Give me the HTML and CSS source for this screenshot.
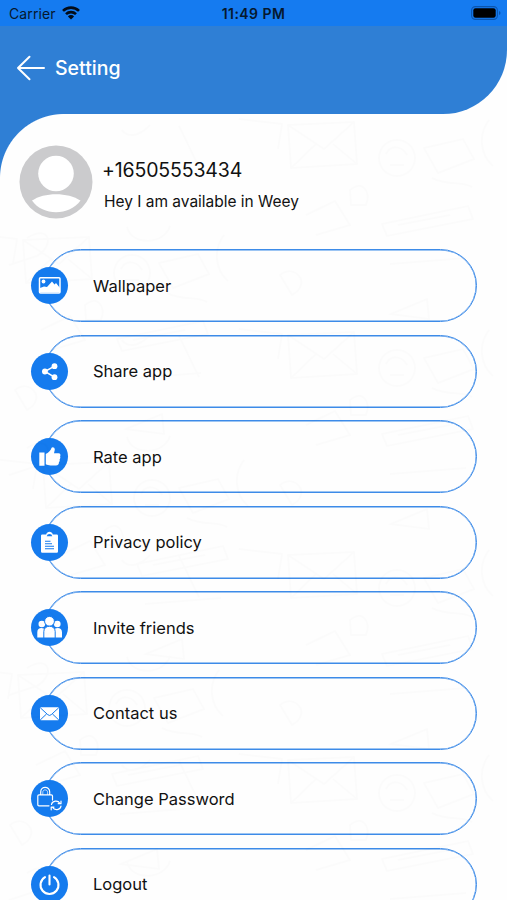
FILE: index.html
```html
<!DOCTYPE html>
<html lang="en">
<head>
<meta charset="utf-8">
<title>Setting</title>
<link rel="stylesheet" href="styles.css">
</head>
<body>
<main class="screen">
  <svg class="doodles" viewBox="0 0 507 900" aria-hidden="true">
    <defs>
      <g id="sketch">
        <path d="M288 125l66-3 3 42-66 4zM288 125l36 24 30-27M291 168l25-24M357 164l-24-20"/>
        <circle cx="397" cy="158" r="18"/><path d="M386 154c5-10 16-8 21 1M390 165h14"/>
        <path d="M424 148l39-9 11 20-36 14zM432 178c16 8 29 3 40 9"/>
        <path d="M382 224l86-18 5 13-86 17zM398 225l52-10M350 190c13-11 21 2 16 15h-15z"/>
        <path d="M489 120c-11 14-9 35 4 46M150 125c-12 13-23 12-28 5M179 126l20 41M239 119l43 5-4 25"/>
        <path d="M27 238c23-14 28 7 10 18l-28 9M127 227c5 20 38 17 43-1M306 215l29-14 15 24-34 10"/>
        <path d="M390 264l76-6M391 314l36-15 2 20zM280 275c14-12 33 8 12 20z"/>
      </g>
    </defs>
    <use href="#sketch"/><use href="#sketch" y="210"/><use href="#sketch" y="430"/><use href="#sketch" y="635"/>
    <use href="#sketch" x="-265" y="115"/><use href="#sketch" x="-245" y="340"/><use href="#sketch" x="-270" y="550"/>
  </svg>

  <div class="status">
    <div class="carrier">
      <span>Carrier</span>
      <svg class="wifi" viewBox="0 0 18 14"><path d="M1 4.9a11.4 11.4 0 0 1 16 0M4 8.2a7.1 7.1 0 0 1 10 0" fill="none" stroke="currentColor" stroke-width="2.6"/><path d="M9 13.5 5.9 10.4a4.4 4.4 0 0 1 6.2 0z" fill="currentColor"/></svg>
    </div>
    <span class="time">11:49 PM</span>
    <svg class="battery" viewBox="0 0 30 14"><rect x=".6" y=".6" width="25.8" height="12.8" rx="3.8" fill="none" stroke="#0b55ae" stroke-width="1.1"/><rect x="2.3" y="2.3" width="22.4" height="9.4" rx="2.2"/><path d="M28 5v4q1.5-.6 1.5-2T28 5z" fill="#0b55ae"/></svg>
  </div>

  <header class="header">
    <svg class="back" viewBox="0 0 30 26"><path d="M28 13H2M13.500 1.800 2 13l11.500 11.200" fill="none" stroke="#fff" stroke-width="2" stroke-linecap="round" stroke-linejoin="round"/></svg>
    <h1>Setting</h1>
  </header>

  <div class="corner"></div>

  <section class="profile">
    <svg class="avatar" viewBox="0 0 74 74"><circle cx="37" cy="37" r="36.5" fill="#cbcbcd"/><circle cx="37" cy="28.5" r="17.8" fill="#fff"/><path d="M13 55.5C25 47 49 47 61.500 55.500C51 70.500 24 71.500 13 55.500z" fill="#fff"/></svg>
    <div class="who">
      <div class="phone">+16505553434</div>
      <div class="about">Hey I am available in Weey</div>
    </div>
  </section>

  <nav class="menu">
    <a class="item">
      <svg class="icon" viewBox="0 0 37 37"><rect x="8.500" y="10.800" width="20.500" height="15.200" rx="1" fill="none" stroke="#fff" stroke-width="1.500"/><circle cx="12.500" cy="14.500" r="1.900" fill="#fff"/><path d="M9 25.500v-4.500l4-1.500 3 .5 5-5.500 2.500 3 1.500-1.500 4 5v4.500z" fill="#fff"/></svg>
      <span>Wallpaper</span>
    </a>
    <a class="item">
      <svg class="icon" viewBox="0 0 37 37"><path d="M23.500 13.200l-9.600 5.300 9.600 5.700" fill="none" stroke="#fff" stroke-width="1.500"/><g fill="#fff"><circle cx="23.500" cy="13.200" r="2.900"/><circle cx="13.900" cy="18.500" r="2.900"/><circle cx="23.500" cy="24.200" r="2.900"/></g></svg>
      <span>Share app</span>
    </a>
    <a class="item">
      <svg class="icon" viewBox="0 0 37 37"><path d="M8.300 14.500h5.200v13.300H8.300zM14.800 16c3.200-1.500 4.800-3.500 5.800-6.200.5-1.200 3.400-.7 3.200 1.900L23 15.300h4.500c2 0 2.300 1.800 1.600 3.300.5 1.200.2 2-.5 2.900.4 1.100 0 2-.7 2.700.2 1.900-.7 3.300-3 3.300h-5.400c-1.900 0-3.200-.5-4.700-1.200z" fill="#fff"/></svg>
      <span>Rate app</span>
    </a>
    <a class="item">
      <svg class="icon" viewBox="0 0 37 37"><path d="M11.200 10.500h4c.8-3.700 5.800-3.700 6.600 0h4q1.200 0 1.200 1.200v15.800q0 1.200-1.200 1.200H11.200q-1.200 0-1.200-1.200V11.700q0-1.200 1.200-1.200z" fill="#fff"/><path d="M15.700 12.300h5.600q-.5-2.200-2.800-2.200t-2.800 2.200z" fill="#157bee"/><path d="M14 17.200h5.500M14 19.700h7M14 22.200h9M14 24.700h9" fill="none" stroke="#157bee" stroke-width="1.100"/></svg>
      <span>Privacy policy</span>
    </a>
    <a class="item">
      <svg class="icon" viewBox="0 0 37 37"><g fill="#fff"><circle cx="10.800" cy="15" r="3.300"/><circle cx="26.300" cy="15" r="3.300"/><path d="M6.300 28.500v-5.300c0-5.600 7-5.400 9-1v6.300zM21.700 28.500v-6.300c2-4.400 9.300-4.600 9.300 1v5.300z"/></g><g fill="#fff" stroke="#157bee"><circle cx="18.500" cy="12.300" r="4.900"/><path d="M12.800 29v-6.500c0-7 11.400-7 11.400 0V29z"/></g></svg>
      <span>Invite friends</span>
    </a>
    <a class="item">
      <svg class="icon" viewBox="0 0 37 37"><rect x="9" y="12.200" width="19" height="13" rx="1" fill="#fff"/><path d="M9.200 12.700l7.600 7q1.700 1.500 3.400 0l7.600-7M9.200 25l6.500-6.200M27.800 25l-6.500-6.200" fill="none" stroke="#157bee" stroke-width="1"/></svg>
      <span>Contact us</span>
    </a>
    <a class="item">
      <svg class="icon" viewBox="0 0 37 37"><g fill="none" stroke="#fff" stroke-width="1.200" stroke-linecap="round" stroke-linejoin="round"><path d="M18 25.800H8q-1.200 0-1.200-1.200v-8.500Q6.800 14.900 8 14.900h12.300q1.200 0 1.200 1.200v4M9.700 14.900v-3c0-6 9-6 9 0v3" /><path d="M11.800 14.500v-2.300c0-3.100 4.800-3.100 4.800 0v2.300" stroke-width=".7"/><path d="M20.500 24.500c.7-4 6.500-4.500 8.300-1.300M30 21v2.700h-2.800M30 26.200c-.7 4-6.500 4.500-8.300 1.300M20.200 29.800v-2.700H23"/></g></svg>
      <span>Change Password</span>
    </a>
    <a class="item">
      <svg class="icon" viewBox="0 0 37 37"><path d="M14 11.200a9 9 0 1 0 9 0M18.500 9.500v9" fill="none" stroke="#fff" stroke-width="2.100" stroke-linecap="round"/></svg>
      <span>Logout</span>
    </a>
  </nav>
</main>
</body>
</html>
```
FILE: styles.css
```css
* { box-sizing: border-box; }
body { margin: 0; background: #fefefe; font-family: Inter, "Liberation Sans", sans-serif; color: #111; }
.screen { position: relative; width: 507px; height: 900px; overflow: hidden; }
.doodles { position: absolute; inset: 0; z-index: 2; width: 507px; height: 900px; fill: none; stroke: #000; stroke-width: 1.5; opacity: .008; pointer-events: none; }

.status { display: grid; grid-template-columns: 1fr auto 1fr; align-items: center; height: 26px; padding: 1px 6px 0 9px; background: #157bf0; color: #06182e; font-size: 14px; }
.carrier { display: flex; align-items: center; gap: 6px; letter-spacing: .1px; }
.wifi { width: 18px; height: 14px; color: #030c18; margin-top: -2px; }
.time { font-weight: 600; font-size: 14px; letter-spacing: .45px; margin-left: -3px; }
.battery { width: 30px; height: 14px; justify-self: end; margin-top: -1px; }

.header { display: flex; align-items: center; gap: 9px; height: 88px; padding: 0 0 4px 16px; background: #2f7fd5; border-bottom-right-radius: 64px; color: #fff; }
.back { width: 30px; height: 26px; margin-top: -1px; }
h1 { margin: -1px 0 0; font-size: 19.500px; font-weight: 550; line-height: 26px; }

.corner { width: 64px; height: 64px; margin-bottom: -64px; background: radial-gradient(circle at 100% 100%, transparent 63.500px, #2f7fd5 64.500px); }

.profile { display: flex; align-items: flex-start; gap: 9px; height: 135px; padding: 31px 0 0 19px; }
.avatar { width: 74px; height: 74px; }
.who { padding-top: 12px; white-space: nowrap; }
.phone { font-size: 19.500px; line-height: 26px; letter-spacing: -.15px; }
.about { margin: 8px 0 0 2px; font-size: 15.500px; line-height: 22px; letter-spacing: -.02px; }

.menu { display: flex; flex-direction: column; gap: 12.500px; padding: 0 30.500px 0 44px; }
.item { display: flex; flex: none; align-items: center; gap: 25px; height: 73px; border: 1px solid #3d8be8; border-radius: 37px; box-shadow: inset 0 0 0 .4px #3d8be8; font-size: 16.500px; white-space: nowrap; }
.icon { flex: none; width: 37px; height: 37px; margin-left: -14px; border-radius: 50%; background: #157bee; }
```
